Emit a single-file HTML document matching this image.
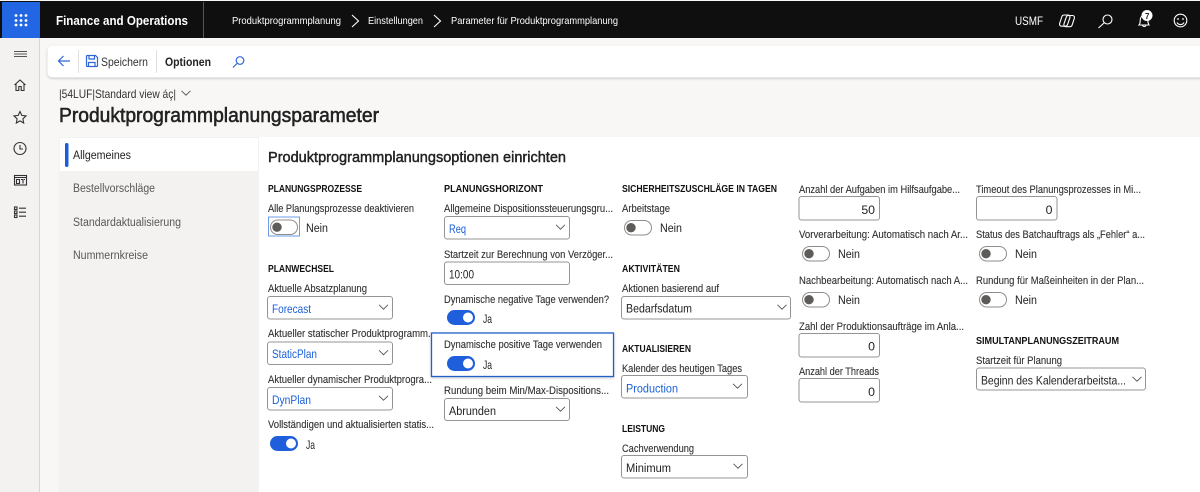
<!DOCTYPE html>
<html lang="de"><head><meta charset="utf-8"><title>Produktprogrammplanungsparameter</title>
<style>
html,body{margin:0;padding:0;width:1200px;height:492px;overflow:hidden;background:#f8f7f6}
svg{display:block}
text{font-family:"Liberation Sans",sans-serif;fill:#2b2a29}
.w{fill:#fff;font-size:10.5px}
.h{font-size:10.5px;font-weight:bold;fill:#111}
.l{font-size:10.8px;fill:#323130;stroke:#323130;stroke-width:.12}
.v{font-size:12.3px;fill:#1f1f1f}
.b{font-size:12.3px;fill:#1a5fd8}
.t{font-size:11.5px;fill:#5a5856}
.sel{fill:#fff;stroke:#969492;stroke-width:1}
.chev{fill:none;stroke:#555;stroke-width:.9}
.off{fill:#fff;stroke:#8f8d8b;stroke-width:1}
.ic{fill:none;stroke:#333;stroke-width:1.1}
.wi{fill:none;stroke:#fff;stroke-width:1.1}
.bi{fill:none;stroke:#2f66d8;stroke-width:1.2}
</style></head><body>
<svg width="1200" height="492" viewBox="0 0 1200 492" xmlns="http://www.w3.org/2000/svg">
<defs>
<filter id="s" x="-5%" y="-20%" width="110%" height="150%"><feDropShadow dx="0" dy="1" stdDeviation="1.2" flood-color="#000" flood-opacity=".22"/></filter>
<g id="tOff"><rect class="off" x=".5" y=".5" width="27" height="14.5" rx="7.2"/><circle cx="7" cy="7.7" r="4.7" fill="#5e5c5a"/></g>
<g id="tOn"><rect x="0" y="0" width="28" height="15" rx="7.5" fill="#1f5fdc"/><circle cx="21" cy="7.5" r="5" fill="#fff"/></g>
<path id="cv" d="M-4.500 -2.200L0 2.200L4.500 -2.200"/>
</defs>
<rect width="1200" height="492" fill="#f8f7f6"/>
<!-- top bar -->
<rect x="0" y="1" width="1200" height="37" fill="#0f0f0f"/>
<rect x="2" y="2" width="38" height="36" fill="#2266e3"/>
<g fill="#fff"><circle cx="16" cy="15.500" r="1.400"/><circle cx="21" cy="15.500" r="1.400"/><circle cx="26" cy="15.500" r="1.400"/><circle cx="16" cy="20.500" r="1.400"/><circle cx="21" cy="20.500" r="1.400"/><circle cx="26" cy="20.500" r="1.400"/><circle cx="16" cy="25" r="1.400"/><circle cx="21" cy="25" r="1.400"/><circle cx="26" cy="25" r="1.400"/></g>
<text x="56" y="25" style="font-size:12.800px;font-weight:bold;fill:#fff" textLength="132" lengthAdjust="spacingAndGlyphs">Finance and Operations</text>
<rect x="203" y="2" width="1" height="36" fill="#555"/>
<text class="w" x="232" y="24" textLength="109" lengthAdjust="spacingAndGlyphs">Produktprogrammplanung</text>
<path class="wi" d="M352 15L358.500 21L352 27"/>
<text class="w" x="368" y="24" textLength="55" lengthAdjust="spacingAndGlyphs">Einstellungen</text>
<path class="wi" d="M434 15L440.500 21L434 27"/>
<text class="w" x="451" y="24" textLength="167" lengthAdjust="spacingAndGlyphs">Parameter für Produktprogrammplanung</text>
<text x="1015" y="25" style="font-size:12px;fill:#fff" textLength="28" lengthAdjust="spacingAndGlyphs">USMF</text>
<path class="wi" d="M1064 15h4a2 2 0 0 1 1.900 2.600l-2.300 6.800a2.600 2.600 0 0 1-2.400 1.800h-3.700a2 2 0 0 1-1.900-2.600l2.200-6.700a2.400 2.400 0 0 1 2.200-1.900z"/>
<path class="wi" d="M1069.500 15.500h3a2 2 0 0 1 1.900 2.600l-2.200 6.700a2.600 2.600 0 0 1-2.400 1.900h-4a2 2 0 0 1-1.900-2.600l2.300-6.800a2.400 2.400 0 0 1 2.300-1.800z"/>
<circle class="wi" cx="1107.500" cy="19.500" r="4.500"/><path class="wi" d="M1104 23L1098.500 28" stroke-width="1.400"/>
<path class="wi" d="M1139 25c1.500-1.500 1-3 1.300-5.500s1.700-4 3.700-4 3.400 1.500 3.700 4 .3 4 1.300 5.500zM1142.500 25.500a2 2 0 0 0 3.500 0"/>
<circle cx="1147" cy="15.500" r="5.500" fill="#fff"/><text x="1145" y="19" style="font-size:8px;font-weight:bold;fill:#222">7</text>
<circle class="wi" cx="1180.500" cy="20.500" r="6.300"/><circle cx="1178" cy="19" r=".9" fill="#fff"/><circle cx="1183" cy="19" r=".9" fill="#fff"/><path class="wi" d="M1177 22.500a4 4 0 0 0 7 0"/>
<!-- left nav -->
<rect x="0" y="38" width="39" height="454" fill="#f3f2f1"/>
<rect x="39" y="38" width="1" height="454" fill="#d9d7d5"/>
<path d="M14 51.500h13M14 54h13M14 56.500h13" stroke="#555" stroke-width="1" fill="none"/>
<path class="ic" d="M14.500 85L20 80l5.500 5M16 84v6.500h2.800v-4h2.400v4H24V84"/>
<path class="ic" d="M20 111.500l1.800 3.900 4.200.5-3.100 2.900.8 4.200-3.700-2.100-3.700 2.100.8-4.200-3.100-2.900 4.200-.5z"/>
<circle class="ic" cx="20" cy="148.500" r="6"/><path class="ic" d="M20 145v4h3"/>
<rect class="ic" x="14.500" y="175.500" width="12" height="9.500"/><path class="ic" d="M14.500 177.500h12M16.500 179.500h3v4h-3zM21 179.500h2v4M24 179.500h1"/>
<g class="ic" stroke-width="1"><rect x="14.500" y="207" width="2.500" height="2.500"/><rect x="14.500" y="211" width="2.500" height="2.500"/><rect x="14.500" y="215" width="2.500" height="2.500"/><path d="M19 208.200h7M19 212.200h7M19 216.200h7"/></g>
<!-- toolbar -->
<rect x="47.500" y="45.500" width="1160" height="32" rx="5" fill="#fff" filter="url(#s)"/>
<path class="bi" d="M70 61H58.500M63.500 56L58.500 61L63.500 66"/>
<rect x="78" y="50" width="1" height="23" fill="#e0dfdd"/>
<path class="bi" d="M86.500 56.500a1 1 0 0 1 1-1h8l2 2v8a1 1 0 0 1-1 1h-9a1 1 0 0 1-1-1z"/><path class="bi" d="M89 56v3h5.500v-3M88.500 66.500v-4h6.500v4"/>
<text x="101" y="66" style="font-size:12px;fill:#333" textLength="47" lengthAdjust="spacingAndGlyphs">Speichern</text>
<rect x="156" y="50" width="1" height="23" fill="#e0dfdd"/>
<text x="165" y="66" style="font-size:12px;font-weight:bold;fill:#222" textLength="46" lengthAdjust="spacingAndGlyphs">Optionen</text>
<circle class="bi" cx="240" cy="60.500" r="3.800"/><path class="bi" d="M237 63.500L233 67.500"/>
<!-- title -->
<text x="59" y="98" style="font-size:12px;fill:#333" textLength="117" lengthAdjust="spacingAndGlyphs">|54LUF|Standard view áç|</text>
<use href="#cv" x="186" y="93" class="chev"/>
<text x="59" y="122" style="font-size:20px;fill:#222;stroke:#222;stroke-width:.55" textLength="320" lengthAdjust="spacingAndGlyphs">Produktprogrammplanungsparameter</text>
<!-- tabs / panel -->
<rect x="59" y="137" width="200" height="355" fill="#f3f2f1"/>
<rect x="259" y="137" width="941" height="355" fill="#fff"/>
<rect x="60" y="138" width="198" height="33" fill="#fff"/>
<rect x="65" y="143" width="3.500" height="24" rx="1.700" fill="#1a5fe0"/>
<text x="73" y="159" style="font-size:11.500px;fill:#222" textLength="58" lengthAdjust="spacingAndGlyphs">Allgemeines</text>
<text class="t" x="73" y="192" textLength="82" lengthAdjust="spacingAndGlyphs">Bestellvorschläge</text>
<text class="t" x="73" y="226" textLength="108" lengthAdjust="spacingAndGlyphs">Standardaktualisierung</text>
<text class="t" x="73" y="259" textLength="75" lengthAdjust="spacingAndGlyphs">Nummernkreise</text>
<text x="268" y="162" style="font-size:14.500px;fill:#222;stroke:#222;stroke-width:.45" textLength="298" lengthAdjust="spacingAndGlyphs">Produktprogrammplanungsoptionen einrichten</text>

<!-- col 1 -->
<text class="h" x="268" y="192" textLength="94" lengthAdjust="spacingAndGlyphs">PLANUNGSPROZESSE</text>
<text class="l" x="268" y="212" textLength="146" lengthAdjust="spacingAndGlyphs">Alle Planungsprozesse deaktivieren</text>
<rect x="268.500" y="217" width="31" height="19" fill="#fff" stroke="#6f9ce8" stroke-width="1"/>
<use href="#tOff" x="270" y="219.500"/>
<text class="v" x="306" y="232" textLength="22" lengthAdjust="spacingAndGlyphs">Nein</text>
<text class="h" x="268" y="272" textLength="66" lengthAdjust="spacingAndGlyphs">PLANWECHSEL</text>
<text class="l" x="268" y="292" textLength="99" lengthAdjust="spacingAndGlyphs">Aktuelle Absatzplanung</text>
<rect class="sel" x="267.500" y="296.500" width="125" height="22.500" rx="2.500"/>
<text class="b" x="272" y="313" textLength="39" lengthAdjust="spacingAndGlyphs">Forecast</text>
<use href="#cv" x="383.500" y="307" class="chev"/>
<text class="l" x="268" y="337" textLength="168" lengthAdjust="spacingAndGlyphs">Aktueller statischer Produktprogramm...</text>
<rect class="sel" x="267.500" y="342" width="125" height="22.500" rx="2.500"/>
<text class="b" x="272" y="358" textLength="45" lengthAdjust="spacingAndGlyphs">StaticPlan</text>
<use href="#cv" x="383.500" y="352.500" class="chev"/>
<text class="l" x="268" y="383" textLength="164" lengthAdjust="spacingAndGlyphs">Aktueller dynamischer Produktprogra...</text>
<rect class="sel" x="267.500" y="387.500" width="125" height="22.500" rx="2.500"/>
<text class="b" x="272" y="404" textLength="39" lengthAdjust="spacingAndGlyphs">DynPlan</text>
<use href="#cv" x="383.500" y="398" class="chev"/>
<text class="l" x="268" y="428" textLength="166" lengthAdjust="spacingAndGlyphs">Vollständigen und aktualisierten statis...</text>
<use href="#tOn" x="270" y="436"/>
<text class="v" x="306" y="449" textLength="9" lengthAdjust="spacingAndGlyphs">Ja</text>

<!-- col 2 -->
<text class="h" x="444" y="192" textLength="99" lengthAdjust="spacingAndGlyphs">PLANUNGSHORIZONT</text>
<text class="l" x="444" y="212" textLength="169" lengthAdjust="spacingAndGlyphs">Allgemeine Dispositionssteuerungsgru...</text>
<rect class="sel" x="444.500" y="216.500" width="125" height="22.500" rx="2.500"/>
<text class="b" x="449" y="233" textLength="17" lengthAdjust="spacingAndGlyphs">Req</text>
<use href="#cv" x="560.500" y="227" class="chev"/>
<text class="l" x="444" y="258" textLength="169" lengthAdjust="spacingAndGlyphs">Startzeit zur Berechnung von Verzöger...</text>
<rect class="sel" x="444.500" y="262" width="125" height="22.500" rx="2.500"/>
<text class="v" x="449" y="278.500" textLength="25" lengthAdjust="spacingAndGlyphs">10:00</text>
<text class="l" x="444" y="303" textLength="165" lengthAdjust="spacingAndGlyphs">Dynamische negative Tage verwenden?</text>
<use href="#tOn" x="447" y="310"/>
<text class="v" x="483" y="323" textLength="9" lengthAdjust="spacingAndGlyphs">Ja</text>
<rect x="431.500" y="333" width="182" height="43.500" fill="#fff" stroke="#2160c9" stroke-width="1.300" filter="url(#s)"/>
<text class="l" x="444" y="348" textLength="158" lengthAdjust="spacingAndGlyphs">Dynamische positive Tage verwenden</text>
<use href="#tOn" x="447" y="356"/>
<text class="v" x="483" y="369" textLength="9" lengthAdjust="spacingAndGlyphs">Ja</text>
<text class="l" x="444" y="394" textLength="165" lengthAdjust="spacingAndGlyphs">Rundung beim Min/Max-Dispositions...</text>
<rect class="sel" x="444.500" y="398.500" width="125" height="22" rx="2.500"/>
<text class="v" x="449" y="415" textLength="47" lengthAdjust="spacingAndGlyphs">Abrunden</text>
<use href="#cv" x="560.500" y="409" class="chev"/>

<!-- col 3 -->
<text class="h" x="622" y="192" textLength="155" lengthAdjust="spacingAndGlyphs">SICHERHEITSZUSCHLÄGE IN TAGEN</text>
<text class="l" x="622" y="212" textLength="48" lengthAdjust="spacingAndGlyphs">Arbeitstage</text>
<use href="#tOff" x="624" y="220"/>
<text class="v" x="660" y="232" textLength="22" lengthAdjust="spacingAndGlyphs">Nein</text>
<text class="h" x="622" y="272" textLength="58" lengthAdjust="spacingAndGlyphs">AKTIVITÄTEN</text>
<text class="l" x="622" y="292" textLength="97" lengthAdjust="spacingAndGlyphs">Aktionen basierend auf</text>
<rect class="sel" x="621.500" y="296.500" width="169" height="22.500" rx="2.500"/>
<text class="v" x="626" y="312.500" textLength="66" lengthAdjust="spacingAndGlyphs">Bedarfsdatum</text>
<use href="#cv" x="782" y="307" class="chev"/>
<text class="h" x="622" y="352" textLength="69" lengthAdjust="spacingAndGlyphs">AKTUALISIEREN</text>
<text class="l" x="622" y="372" textLength="120" lengthAdjust="spacingAndGlyphs">Kalender des heutigen Tages</text>
<rect class="sel" x="621.500" y="375.500" width="126" height="22.500" rx="2.500"/>
<text class="b" x="626" y="392.500" textLength="52" lengthAdjust="spacingAndGlyphs">Production</text>
<use href="#cv" x="737.500" y="386" class="chev"/>
<text class="h" x="622" y="432" textLength="43" lengthAdjust="spacingAndGlyphs">LEISTUNG</text>
<text class="l" x="622" y="452" textLength="72" lengthAdjust="spacingAndGlyphs">Cachverwendung</text>
<rect class="sel" x="621.500" y="455.500" width="126" height="22.500" rx="2.500"/>
<text class="v" x="626" y="472" textLength="45" lengthAdjust="spacingAndGlyphs">Minimum</text>
<use href="#cv" x="738" y="466" class="chev"/>

<!-- col 4 -->
<text class="l" x="799" y="193" textLength="161" lengthAdjust="spacingAndGlyphs">Anzahl der Aufgaben im Hilfsaufgabe...</text>
<rect class="sel" x="799" y="196.500" width="80.500" height="23.500" rx="2.500"/>
<text class="v" x="875" y="214" text-anchor="end">50</text>
<text class="l" x="799" y="238" textLength="169" lengthAdjust="spacingAndGlyphs">Vorverarbeitung: Automatisch nach Ar...</text>
<use href="#tOff" x="802" y="246"/>
<text class="v" x="838" y="258" textLength="22" lengthAdjust="spacingAndGlyphs">Nein</text>
<text class="l" x="799" y="284" textLength="169" lengthAdjust="spacingAndGlyphs">Nachbearbeitung: Automatisch nach A...</text>
<use href="#tOff" x="802" y="292"/>
<text class="v" x="838" y="304" textLength="22" lengthAdjust="spacingAndGlyphs">Nein</text>
<text class="l" x="799" y="330" textLength="165" lengthAdjust="spacingAndGlyphs">Zahl der Produktionsaufträge im Anla...</text>
<rect class="sel" x="799" y="333.500" width="80.500" height="23.500" rx="2.500"/>
<text class="v" x="875" y="350.500" text-anchor="end">0</text>
<text class="l" x="799" y="375" textLength="80" lengthAdjust="spacingAndGlyphs">Anzahl der Threads</text>
<rect class="sel" x="799" y="378.500" width="80.500" height="23.500" rx="2.500"/>
<text class="v" x="875" y="396" text-anchor="end">0</text>

<!-- col 5 -->
<text class="l" x="976" y="193" textLength="165" lengthAdjust="spacingAndGlyphs">Timeout des Planungsprozesses in Mi...</text>
<rect class="sel" x="976.500" y="196.500" width="80.500" height="23.500" rx="2.500"/>
<text class="v" x="1052.500" y="214" text-anchor="end">0</text>
<text class="l" x="976" y="238" textLength="169" lengthAdjust="spacingAndGlyphs">Status des Batchauftrags als „Fehler“ a...</text>
<use href="#tOff" x="979" y="246"/>
<text class="v" x="1015" y="258" textLength="22" lengthAdjust="spacingAndGlyphs">Nein</text>
<text class="l" x="976" y="284" textLength="168" lengthAdjust="spacingAndGlyphs">Rundung für Maßeinheiten in der Plan...</text>
<use href="#tOff" x="979" y="292"/>
<text class="v" x="1015" y="304" textLength="22" lengthAdjust="spacingAndGlyphs">Nein</text>
<text class="h" x="976" y="344" textLength="143" lengthAdjust="spacingAndGlyphs">SIMULTANPLANUNGSZEITRAUM</text>
<text class="l" x="976" y="364" textLength="86" lengthAdjust="spacingAndGlyphs">Startzeit für Planung</text>
<rect class="sel" x="976.500" y="368" width="169" height="22" rx="2.500"/>
<text class="v" x="981" y="384.500" textLength="145" lengthAdjust="spacingAndGlyphs">Beginn des Kalenderarbeitsta...</text>
<use href="#cv" x="1137" y="379" class="chev"/>
</svg>
</body></html>
